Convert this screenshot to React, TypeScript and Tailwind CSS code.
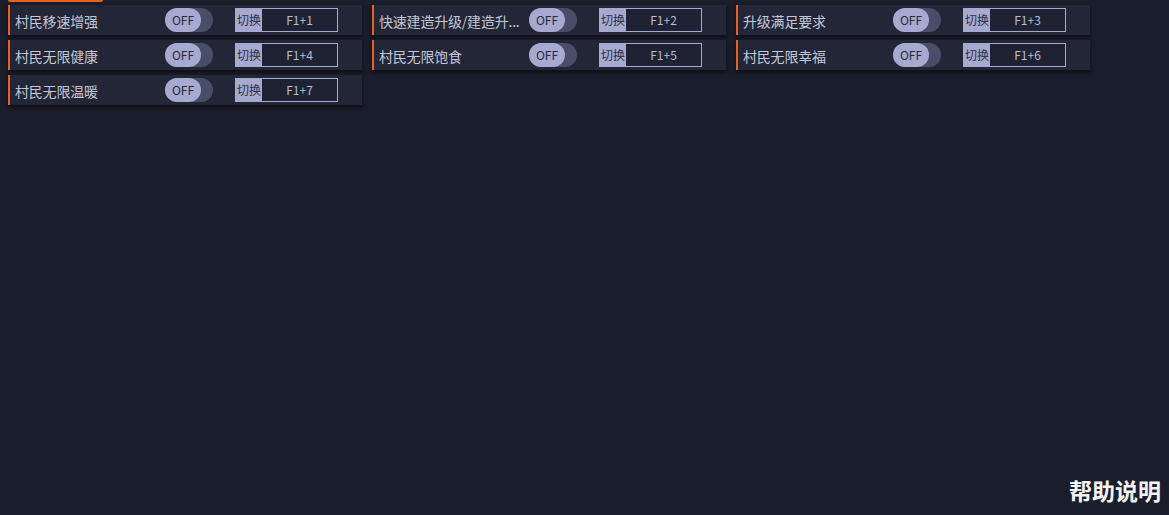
import React from 'react';

type Cheat = {
    name: string;
    key: string;
};

// the long name is shown cut, as in the game's trainer panel
const cheats: Cheat[] = [
    { name: '村民移速增强', key: 'F1+1' },
    { name: '快速建造升级/建造升...', key: 'F1+2' },
    { name: '升级满足要求', key: 'F1+3' },
    { name: '村民无限健康', key: 'F1+4' },
    { name: '村民无限饱食', key: 'F1+5' },
    { name: '村民无限幸福', key: 'F1+6' },
    { name: '村民无限温暖', key: 'F1+7' },
];

const font = { fontFamily: '"Noto Sans CJK SC", "Noto Sans", sans-serif' };

function CheatRow({ cheat }: { cheat: Cheat }) {
    return (
        <div className="flex h-[30px] items-center border-l-2 border-[#e8611e] bg-[#232637] pl-[5px] shadow-[0_2px_4px_rgba(0,0,0,0.55)]">
            <span className="w-[150px] shrink-0 whitespace-nowrap pt-[2px] text-[14px] tracking-[-0.2px] text-[#c3c6d6]">{cheat.name}</span>
            <div className="flex h-[24px] w-[48px] shrink-0 items-center rounded-full bg-[#4a4d68]">
                <div className="flex h-[24px] w-[36px] items-center justify-center rounded-full bg-[#a7aad0] text-[12px] text-[#262a3e]">
                    OFF
                </div>
            </div>
            <div className="ml-[22px] flex h-[24px] w-[103px] shrink-0 items-stretch border border-[#a7aad0]">
                <div className="flex w-[26px] items-center justify-center bg-[#a7aad0] text-[12px] text-[#2c3044]">切换</div>
                <div className="flex flex-1 items-center justify-center bg-[#1f2233] text-[12px] text-[#b9bcd2]">{cheat.key}</div>
            </div>
        </div>
    );
}

export default function App() {
    return (
        <div className="flex h-[515px] flex-col bg-[#1a1d2a]" style={font}>
            <div className="ml-[8px] h-[2px] w-[95px] rounded-b bg-[#e8611e]" />
            <div className="mt-[3px] grid grid-cols-[354px_354px_354px] gap-x-[10px] gap-y-[5px] pl-[8px]">
                {cheats.map((c) => (
                    <CheatRow key={c.key} cheat={c} />
                ))}
            </div>
            <div className="flex-1" />
            <div className="flex justify-end pb-[10px] pr-[8px]">
                <span className="text-[23px] font-bold leading-[30px] text-[#f4f4f6]">帮助说明</span>
            </div>
        </div>
    );
}
